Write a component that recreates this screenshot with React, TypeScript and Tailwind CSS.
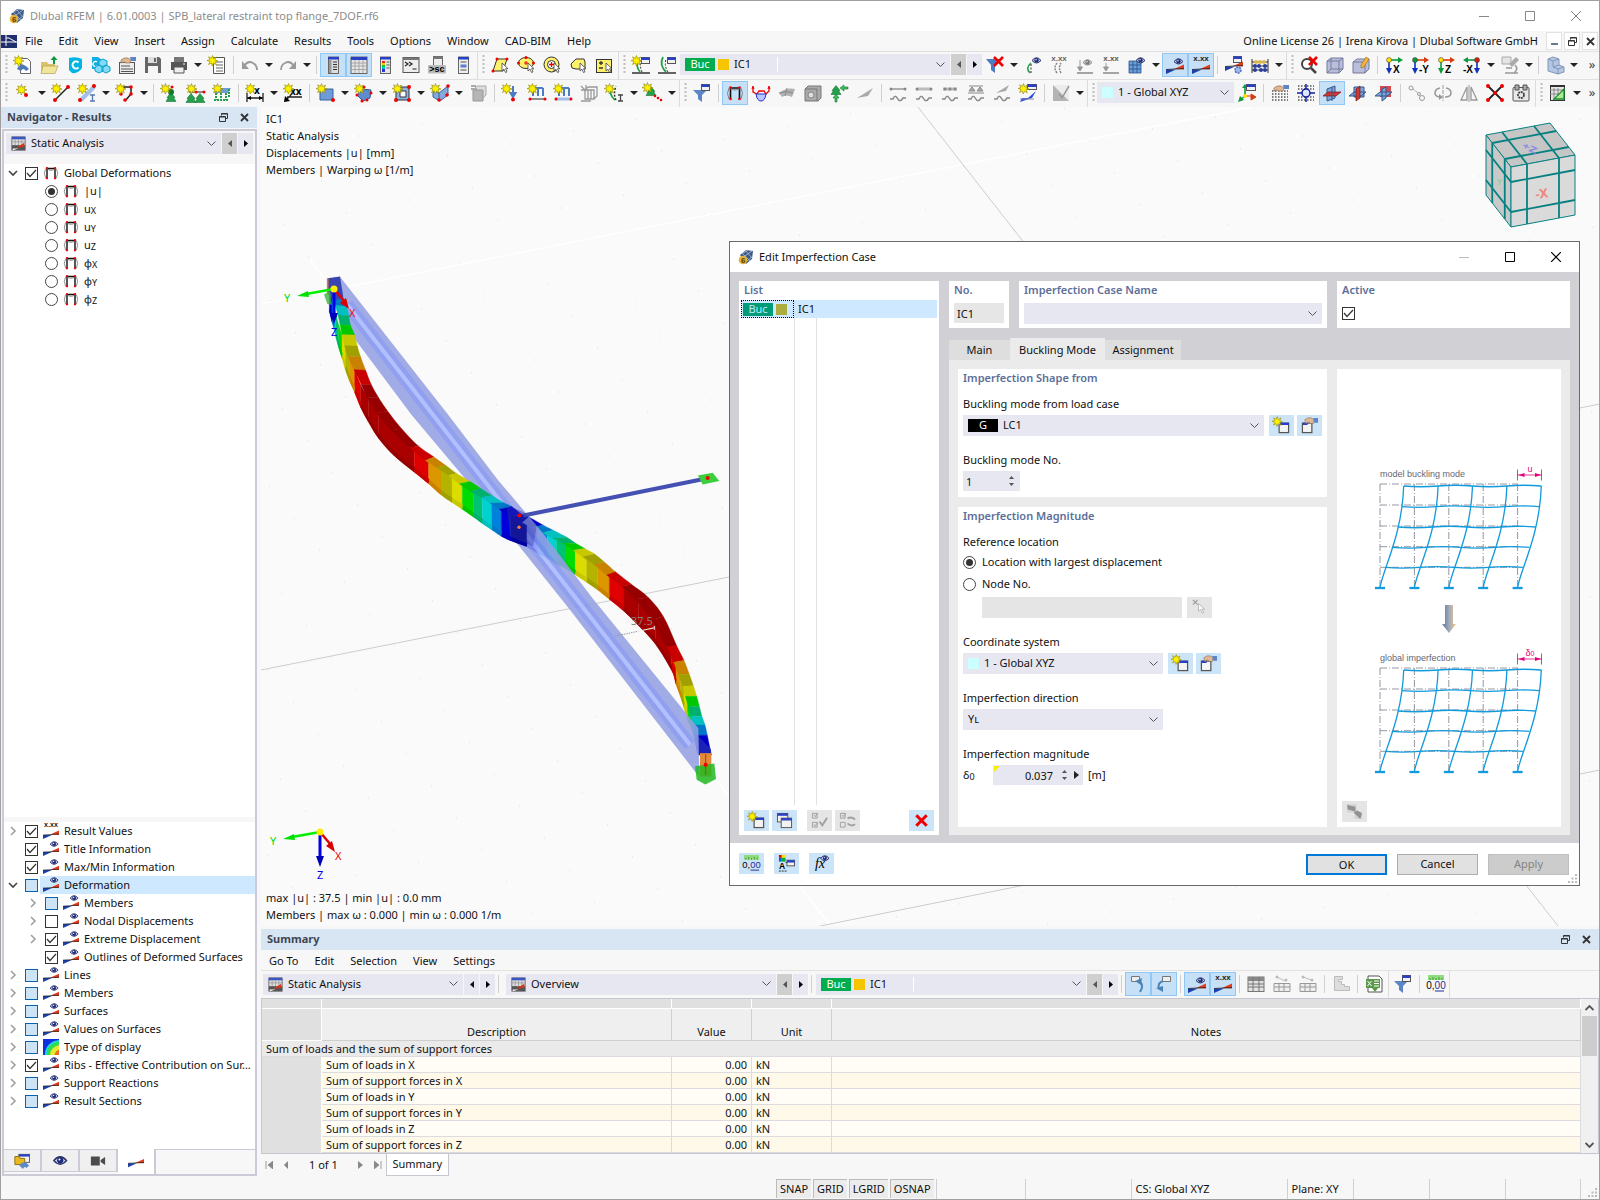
import React, { useState } from 'react';

type Children = { children?: React.ReactNode };

/* ---------- icon parts ---------- */

const Star = ({ x = 0, y = 0 }: { x?: number; y?: number }) => (
  <path
    transform={`translate(${x} ${y})`}
    d="M4.500-.5l1 3 3-1.500L7 4l3 1-3 .8 1.300 3-2.800-1.600L4.300 10 3.300 7 .5 8.500 2 5.500-1 4.500l2.900-.8L.6.8l2.800 1.500z"
    fill="#fff000"
    stroke="#8f8400"
    strokeWidth=".6"
  />
);

const Dots = ({ at, r = 1.5, fill = '#f00000' }: { at: number[][]; r?: number; fill?: string }) => (
  <>
    {at.map(([x, y]) => (
      <circle key={`${x}-${y}`} cx={x} cy={y} r={r} fill={fill} />
    ))}
  </>
);

const Eye = ({ x = 0, y = 0, gray = false }: { x?: number; y?: number; gray?: boolean }) => (
  <g transform={`translate(${x} ${y})`}>
    <path d="M0 3.500Q4.500-2 9 3.500 4.500 8.500 0 3.500z" fill={gray ? '#d8d8d8' : '#c3cbee'} stroke={gray ? '#888' : '#27305f'} />
    <circle cx="4.500" cy="3.300" r="2.200" fill={gray ? '#777' : '#1c2a7a'} />
    <circle cx="4" cy="2.700" r=".7" fill="#fff" />
  </g>
);

const Wedge = ({ y = 0 }: { y?: number }) => (
  <g transform={`translate(0 ${y})`}>
    <path d="M0 12.500h10L0 17z" fill="#1c3fae" />
    <path d="M8 12l10-4.500V12.500z" fill="#e23a1c" />
    <path d="M0 12.500L18 11.500" stroke="#222" strokeWidth=".8" />
  </g>
);

const Win = ({ x = 0, y = 0, w = 10, h = 8 }: { x?: number; y?: number; w?: number; h?: number }) => (
  <g>
    <rect x={x + 0.5} y={y + 0.5} width={w} height={h} fill="#f2f2f2" stroke="#555" />
    <rect x={x + 0.5} y={y + 0.5} width={w} height="2.500" fill="#2a3fc8" />
  </g>
);

const Cursor = ({ x = 0, y = 0 }: { x?: number; y?: number }) => (
  <path transform={`translate(${x} ${y})`} d="M0 0v8l2-1.800L3.500 9.500l1.500-.7L3.600 5.700H6z" fill="#fff" stroke="#444" strokeWidth=".8" />
);

const Hand = () => (
  <>
    <path d="M3 4q3-3 7-2l3 2-1 3H8L6 6 3 7z" fill="#e0b894" stroke="#8a6547" strokeWidth=".6" />
    <path d="M12 1h6v4h-5z" fill="#5b84c9" />
  </>
);

const Wave = () => <path d="M1 15h3q2-5 4.500-.5T14 14h3" fill="none" stroke="#888" strokeWidth="1.500" />;

const Values = ({ y = 5, fill = '#222' }: { y?: number; fill?: string }) => (
  <text x="9" y={y} textAnchor="middle" fontSize="8" fontWeight="700" fontFamily="Liberation Sans, sans-serif" fill={fill}>
    x.xx
  </text>
);

const Axis = ({ name, a, b, c, left = false }: { name: string; a: string; b: string; c: string; left?: boolean }) => (
  <>
    <path d={left ? 'M14 4H4' : 'M4 4h10'} stroke={a} strokeWidth="1.600" />
    <path d={left ? 'M5 1L0 4l5 3z' : 'M13 1l5 3-5 3z'} fill={a} />
    <path d={left ? 'M14 4v9' : 'M4 4v9'} stroke={b} strokeWidth="1.600" />
    <path d={left ? 'M11 12h6l-3 6z' : 'M1 12h6l-3 6z'} fill={b} />
    <circle cx={left ? 14 : 4} cy="4" r="2.500" fill={c} stroke="#333" strokeWidth=".5" />
    <text x={left ? 0 : 8} y="17" fontSize="10" fontWeight="700" fontFamily="Liberation Sans, sans-serif">
      {name}
    </text>
  </>
);

const FrameShape = () => (
  <>
    <path d="M4.500 15V4h9v11" fill="none" stroke="#111" strokeWidth="1.600" />
    <path d="M4 4Q9 8 14 4M3 15Q0 9 3 4M15 15q3-6 0-11" fill="none" stroke="#777" strokeWidth=".9" />
    <Dots at={[[4.5, 3.5], [13.5, 3.5], [4.5, 15], [13.5, 15]]} r={1.3} />
  </>
);

const Support = ({ x, y }: { x: number; y: number }) => (
  <path transform={`translate(${x} ${y})`} d="M0-2.500l4 5H2.500l2.500 4h-10l2.500-4H-4z" fill="#23a04a" stroke="#0c6128" strokeWidth=".5" />
);

/* ---------- icons ---------- */

const icons: Record<string, React.ReactNode> = {
  'New model': (<><path d="M6.500 2.500h7l3 3v12h-10z" fill="#fff" stroke="#666" /><path d="M3 13q4-9 12 0l-3 2q-3-4-5 0z" fill="#4f79b8" /><Star /></>),
  Open: (<><path d="M1 6h6l1.500 2H15v9H1z" fill="#d9c46a" /><path d="M3 10h15l-3 7.500H1z" fill="#f2e49a" stroke="#a8964a" strokeWidth=".6" /><path d="M13 8V4h-2.500L14 0l3.500 4H15v4z" fill="#0a9a3c" /></>),
  'Dlubal Center': (<><path d="M3 2q7-2 13 1v9q-4 6-10 5L3 14z" fill="#00b5e2" /><path d="M12.500 6.500a3.500 3.500 0 1 0 0 5" fill="none" stroke="#fff" strokeWidth="2" /></>),
  Blocks: (<><path d="M0 1h6l4 3v9H0z" fill="#13aee0" /><path d="M5 6a2.500 2.500 0 1 0 0 4" fill="none" stroke="#fff" strokeWidth="1.300" /><path d="M11 3l4 2v4l-4 2-4-2V5zM7 9l4 2v4l-4 2-4-2v-4zM14 9l4 2v4l-4 2-4-2v-4z" fill="#7fdcf6" stroke="#0b9fd0" /></>),
  Edit: (<><rect x="1.500" y="6.500" width="15" height="11" fill="#ececec" stroke="#555" /><path d="M3 10h9M3 13h12M3 15.500h12" stroke="#555" /><Hand /></>),
  Save: (<><path d="M1 1h14l2 2v14H1z" fill="#666" /><path d="M4 1h9v6H4z" fill="#ddd" /><path d="M4 10h10v7H4z" fill="#f5f5f5" /><path d="M10 2h2v4h-2z" fill="#666" /></>),
  Print: (<><path d="M4 1h10v5H4z" fill="#777" /><path d="M1 6h16v8H1z" fill="#555" /><path d="M4 11h10v6H4z" fill="#eee" stroke="#555" /><path d="M13 8h2" stroke="#fff" /></>),
  Report: (<><path d="M5.500 1.500h11v16h-11z" fill="#fff" stroke="#555" /><path d="M8 6h7M8 9h7M8 12h7M8 15h7" stroke="#666" /><Star /></>),
  Undo: (<><path d="M3 10q4-6 9-3 4 2 4 7" fill="none" stroke="#9a9a9a" strokeWidth="1.800" /><path d="M1 5v8h7z" fill="#9a9a9a" /></>),
  Redo: (<><path d="M15 10q-4-6-9-3-4 2-4 7" fill="none" stroke="#9a9a9a" strokeWidth="1.800" /><path d="M17 5v8h-7z" fill="#9a9a9a" /></>),
  Navigator: (<><rect x="4.500" y="1" width="10" height="16.500" fill="#ddd" stroke="#666" /><path d="M4 1h11v2.500H4z" fill="#2a3fc8" /><path d="M9 6h4M9 8.500h4M9 11h4M9 13.500h4" stroke="#333" /><path d="M5 4h2.500v13H5z" fill="#999" /></>),
  Tables: (<><rect x="1" y="1" width="16" height="16.500" fill="#e6e6e6" stroke="#666" /><path d="M1 1h16v3H1z" fill="#2a3fc8" /><path d="M1 7h16M1 10h16M1 13.500h16M5 4v13M9 4v13M13 4v13" stroke="#999" strokeWidth=".8" /></>),
  'Control panel': (<><rect x="4.500" y="1" width="10" height="16.500" fill="#e6e6e6" stroke="#666" /><path d="M4 1h11v2.500H4z" fill="#2a3fc8" /><path d="M6 5h3v2H6z" fill="#e22" /><path d="M6 7h3v2H6z" fill="#dd0" /><path d="M6 9h3v2H6z" fill="#0c3" /><path d="M6 11h3v2H6z" fill="#0bd" /><path d="M6 13h3v3H6z" fill="#33d" /><path d="M10.500 6h3M10.500 9h3M10.500 12h3" stroke="#555" /></>),
  Console: (<><rect x="1" y="1.500" width="16" height="15" fill="#eee" stroke="#555" /><path d="M1 1.500h16v2.500H1z" fill="#777" /><path d="M3 6l3 2-3 2M7 6l3 2-3 2M10.500 13h4" fill="none" stroke="#222" strokeWidth="1.200" /></>),
  Script: (<><rect x="5.500" y=".5" width="9" height="9" fill="#eee" stroke="#666" /><path d="M5 .5h10v2.500H5z" fill="#777" /><rect y="9" width="18" height="8.500" rx="1" fill="#bbb" /><text x="9" y="16" textAnchor="middle" fontSize="9" fontWeight="700" fontFamily="Liberation Sans, sans-serif">&gt;sc</text></>),
  Manager: (<><rect x="4.500" y="1" width="10" height="16.500" fill="#eee" stroke="#666" /><path d="M4 1h11v2.500H4z" fill="#2a3fc8" /><path d="M6.500 6h6M6.500 14h6" stroke="#555" /><path d="M6.500 8.500h6v3h-6z" fill="#5a7fd0" /></>),
  'Select area': (<><path d="M6 3h10l-4 12H2z" fill="#fdf06a" stroke="#333" /><Dots at={[[6, 3], [16, 3], [2, 15]]} /><Cursor x={11} y={7} /></>),
  'Select ellipse': (<><ellipse cx="9" cy="7" rx="7.500" ry="5.500" fill="#fdf06a" stroke="#333" /><path d="M9 5v4M7 7h4" stroke="#e00" /><Dots at={[[9, 1.5], [1.5, 7], [16.5, 7]]} /><Cursor x={11} y={7} /></>),
  'Select ring': (<><circle cx="8.500" cy="8.500" r="7.500" fill="#fdf06a" stroke="#333" /><circle cx="8.500" cy="8.500" r="4" fill="#fff" stroke="#333" /><path d="M8.500 6v5M6 8.500h5" stroke="#e00" strokeWidth="1.300" /><Cursor x={11} y={7} /></>),
  'Select lasso': (<><path d="M2 8l5-5h8l1 3v7H7l-4-1z" fill="#fdf06a" stroke="#333" /><Cursor x={11} y={7} /></>),
  'Select by value': (<><rect x="1.500" y="3.500" width="15" height="13" fill="#fdf06a" stroke="#333" /><path d="M6 5v4M4 7h4M4 12h4" stroke="#333" strokeWidth="1.300" /><Cursor x={11} y={7} /></>),
  'New load case': (<><path d="M8 16Q3 10 7 3" fill="none" stroke="#23a04a" strokeWidth="1.800" /><path d="M10 16Q7 10 10 3" fill="none" stroke="#333" strokeDasharray="2 1.500" /><path d="M0 17h18" stroke="#333" strokeWidth="1.500" /><Win x={9} y={1} w={8} h={6} /><Star /></>),
  'Edit load case': (<><path d="M8 16Q1 9 5 1" fill="none" stroke="#23a04a" strokeWidth="1.800" /><path d="M10 16Q6 10 8 3" fill="none" stroke="#333" strokeDasharray="2 1.500" /><path d="M0 17h18" stroke="#333" strokeWidth="1.500" /><Win x={9} y={1} w={8} h={6} /></>),
  'Delete filter': (<><path d="M0 3h14L9 9v8l-4-3V9z" fill="#4b7cc4" /><path d="M8 1l9 9M17 1l-9 9" stroke="#f00000" strokeWidth="2.600" /></>),
  'Show imperfection': (<><path d="M6 17Q1 12 7 7" fill="none" stroke="#23a04a" strokeWidth="1.600" /><path d="M7 17V7" stroke="#333" strokeDasharray="2 1.500" /><Eye x={8} y={1} /></>),
  'Imperfection values': (<><Values fill="#666" /><path d="M7 17Q3 12 7 7M11 17Q8 12 11 7" fill="none" stroke="#888" strokeWidth="1.500" strokeDasharray="2 1" /></>),
  'Show loads': (<><path d="M1 17h16" stroke="#888" strokeWidth="1.500" /><path d="M4 4v9M1.500 11L4 15l2.500-4z" stroke="#999" fill="#999" /><Eye x={7} y={3} gray /></>),
  'Load values': (<><Values fill="#555" /><path d="M1 17h16" stroke="#888" strokeWidth="1.500" /><path d="M4 7v6M1.500 11L4 15l2.500-4z" stroke="#999" fill="#999" /></>),
  'Show mesh': (<><path d="M1 5h12v12H1z" fill="#6d9fd8" /><path d="M1 9h12M1 13h12M5 5v12M9 5v12M1 5h12v12H1z" stroke="#26528a" fill="none" strokeWidth=".8" /><Eye x={8} y={1} /></>),
  'Show results': (<><Wedge y={1} /><Eye x={8} y={2} /></>),
  'Result values': (<><Values /><Wedge y={1} /></>),
  'Result settings': (<><Wedge y={-2} /><Win x={8} y={0} w={8} h={6} /><circle cx="13" cy="14" r="3" fill="#9db8ee" stroke="#4c70c4" strokeWidth="1.500" strokeDasharray="2 1" /></>),
  Abacus: (<><path d="M1 3v14M17 3v14M1 6h16M1 10h16M1 14h16" stroke="#333" /><Dots at={[[5, 6], [9, 6], [13, 6]]} fill="#ddb84a" r={2} /><Dots at={[[4, 10], [8, 10], [14, 10], [4, 14], [10, 14], [14, 14]]} fill="#2a3f9a" r={2} /></>),
  'Zoom all': (<><circle cx="7" cy="8" r="5" fill="#fff" stroke="#444" strokeWidth="2" /><path d="M11 12l5 5" stroke="#444" strokeWidth="2.500" /><path d="M9 1l8 8M17 1L9 9" stroke="#f00000" strokeWidth="2.600" /></>),
  'Solid view': (<><path d="M1 5l4-3h12v11l-4 4H1z" fill="#b9bedb" stroke="#767b9c" /><path d="M1 5h12v12M13 5l4-3M5 2v11L1 17M5 13h12" fill="none" stroke="#767b9c" /></>),
  'Edit view': (<><path d="M1 6l4-3h12v10l-4 4H1z" fill="#b9bedb" stroke="#767b9c" /><path d="M1 6h12v11M13 6l4-3" fill="none" stroke="#767b9c" /><path d="M9 9l5-8 3 2-5 8-3 1z" fill="#f3b23a" stroke="#9a6a12" strokeWidth=".6" /></>),
  'View X': <Axis name="X" a="#0a9a3c" b="#1030c0" c="#ffe000" />,
  'View -Y': <Axis name="-Y" a="#d83a10" b="#1030c0" c="#0a9a3c" />,
  'View Z': <Axis name="Z" a="#d83a10" b="#0a9a3c" c="#ffe000" />,
  'View -X': <Axis name="-X" a="#0a9a3c" b="#1030c0" c="#d02010" left />,
  Microscope: (<><path d="M1 1h9v7H1z" fill="#e4e4e4" stroke="#aaa" /><path d="M15 1l3 3-7 7-3-3z" fill="#aaa" /><path d="M4 17h13M14 9q4 4-1 8M5 12h6" fill="none" stroke="#999" strokeWidth="1.600" /></>),
  'Model display': (<><path d="M2 3l5-2 6 2v6l5 2v5l-6 2-10-3z" fill="#b3c6e2" stroke="#8298bb" /><path d="M2 3l5 2 6-2M7 5v6l6-2M7 11l5 2 6-2M12 13v5" fill="none" stroke="#8298bb" /></>),
  // second row
  'New node': (<><Star x={3} y={1} /><Dots at={[[12, 11]]} r={2} /></>),
  'New line': (<><path d="M3 16L16 3" stroke="#222" strokeWidth="1.500" /><Dots at={[[3, 16], [16, 3]]} r={2} /><Star /></>),
  'New member': (<><path d="M3 16L16 3" stroke="#a3bfe6" strokeWidth="4" /><Dots at={[[2, 16], [16, 2]]} r={2} /><path d="M12 11h5M12 17h5M14.500 11v6" stroke="#5578b0" strokeWidth="1.300" /><Star /></>),
  'New member set': (<><path d="M5 3h10v7l-6 7" fill="none" stroke="#222" strokeWidth="1.500" /><Dots at={[[15, 3], [15, 10], [9, 16], [5, 10]]} r={1.8} /><Star /></>),
  'Nodal support': (<><Support x={10} y={11} /><circle cx="10" cy="8" r="3" fill="#0d7a30" /><Dots at={[[11, 3]]} /><Star /></>),
  'Line support': (<><path d="M2 8h15" stroke="#222" /><Support x={4} y={12} /><Support x={13} y={12} /><Dots at={[[9, 8], [17, 8]]} /><Star /></>),
  'Surface support': (<><path d="M5 4h13l-3 5H1z" fill="#6f9bd8" /><path d="M3 9v7M8 9v7M13 9v7M1 16h15M16 5v8" stroke="#23a04a" strokeWidth="2" strokeDasharray="2 1" /><Star /></>),
  Dimension: (<><path d="M1 9v9M17 9v9M1 14h16" stroke="#222" strokeWidth="1.300" /><path d="M1 14l4-2v4zM17 14l-4-2v4z" /><text x="8" y="10" fontSize="10" fontWeight="700">x</text><Star /></>),
  'Dimension slope': (<><path d="M3 13h15M1 17l6-6" stroke="#222" strokeWidth="1.300" /><path d="M0 18l1-6 5 5z" /><text x="6" y="11" fontSize="10" fontWeight="700">xx</text><Star /></>),
  'New surface': (<><path d="M3 5h13v11H3z" fill="#6f9bd8" stroke="#38629c" /><Dots at={[[16, 16]]} r={2} /><Star /></>),
  'New opening': (<><path d="M2 11l5-6 9 1-1 8-7 3z" fill="#5f8ccc" stroke="#2f568f" /><Dots at={[[2, 11], [16, 9], [7, 17], [12, 16], [9, 3]]} /><Star /></>),
  'Surface opening': (<><path d="M3 3h13v13H3z" fill="#8fb3e3" stroke="#333" /><path d="M7 7h6v6H7z" fill="#fff" stroke="#333" /><Dots at={[[3, 16], [16, 3], [16, 16]]} r={2} /><Star /></>),
  'New solid': (<><path d="M2 6l6 3 9-7v9l-8 6-7-4z" fill="#84aade" stroke="#38629c" /><path d="M8 9v8" stroke="#38629c" /><Dots at={[[8, 16], [16, 11], [17, 2]]} r={1.8} /><Star /></>),
  'Solid set': (<><path d="M5 5l3-3h9v9l-3 3" fill="#ddd" stroke="#aaa" /><path d="M4 6h10v11H4z" fill="#b5b5b5" stroke="#999" /><path d="M2 2h5M2 5h6" stroke="#aaa" strokeWidth="2" /></>),
  'Nodal load': (<><path d="M11 2v9M8.500 9l2.500 4 2.500-4z" stroke="#4b7cc4" strokeWidth="2" fill="#4b7cc4" /><Dots at={[[11, 15.5]]} r={2} /><Star /></>),
  'Line load': (<><path d="M3 4h12M5 4v8M10 4v8M15 4v8" stroke="#4b7cc4" strokeWidth="2" /><path d="M2 15h15" stroke="#222" /><Dots at={[[2, 15], [17, 15]]} /><Star /></>),
  'Member load': (<><path d="M5 4h10M5 4v8M10 4v8M15 4v8" stroke="#4b7cc4" strokeWidth="2" /><path d="M2 15h15" stroke="#a3bfe6" strokeWidth="3" /><Dots at={[[2, 15], [17, 15]]} /><Star /></>),
  'Solid load': (<><path d="M5 6h9v9H5zM8 3h9v9l-3 3M5 6l3-3M1 2l5 5M6 1v5M1 6h5M1 17h10M8 6v9M11 6v9" fill="none" stroke="#999" strokeWidth="1.300" /></>),
  Imperfection: (<><path d="M9 16Q2 10 6 3" fill="none" stroke="#23a04a" strokeWidth="1.800" /><path d="M10 16Q7 10 10 2" fill="none" stroke="#333" strokeWidth="1.500" strokeDasharray="2 1.500" /><path d="M12 11h5M12 17h5M14.500 11v6" stroke="#444" strokeWidth="1.300" /><Star x={-1} /></>),
  'Imposed displacement': (<><Support x={7} y={5} /><Dots at={[[11, 12], [14, 14], [17, 16]]} r={1.3} /><Star x={-1} y={-1} /></>),
  Filter: (<><path d="M0 6h14L9 11v7l-4-3v-4z" fill="#5a86c8" /><Win x={8} y={0} w={8} h={6} /></>),
  Deformations: <FrameShape />,
  'Internal forces': (<><path d="M1 3v5l4 2 2-3h5l2 3 3-3V3" fill="none" stroke="#e00" strokeWidth="1.300" /><path d="M0 5l1-3 1 3M16 5l1-3 1 3" stroke="#e00" fill="none" /><path d="M4 10h10q-1 7-5 7t-5-7z" fill="#b9c6ff" stroke="#2030d0" /></>),
  Stresses: (<><path d="M1 9q7-6 16-4l-3 8Q8 10 4 13z" fill="#b0b0b0" /><path d="M1 9q8-3 14 0M9 4l-2 8" stroke="#888" fill="none" /></>),
  'Solid results': (<><path d="M1 5l3-3h13v12l-3 3H1z" fill="#aaa" stroke="#777" /><path d="M1 5h12v12" fill="none" stroke="#777" /><circle cx="7" cy="11" r="3" fill="#ddd" stroke="#888" /></>),
  Reactions: (<><Support x={6} y={4} /><path d="M5 18v-4H3l3-4 3 4H7v4zM10 4l4-3v2h4v2h-4v2z" fill="#3bbd5a" stroke="#137a2c" strokeWidth=".6" /></>),
  'Section results': <path d="M1 14L17 4 12 12zM3 14h9" fill="#aaa" />,
  'Wave 1': (<><path d="M2 5h14" stroke="#888" strokeWidth="1.300" /><Dots at={[[2, 5], [16, 5]]} fill="#888" /><Wave /></>),
  'Wave 2': (<><path d="M2 5h14" stroke="#bbb" strokeWidth="3" /><Dots at={[[2, 5], [16, 5]]} fill="#888" /><Wave /></>),
  'Wave 3': (<><path d="M2 5h14" stroke="#bbb" strokeWidth="3" /><Dots at={[[4, 5], [9, 5], [14, 5]]} fill="#888" /><Wave /></>),
  'Wave 4': (<><path d="M2 2h14M5 3l-3 4h6zM13 3l-3 4h6zM1 9h16" fill="#aaa" stroke="#888" /><Wave /></>),
  'Wave 5': (<><path d="M3 9L16 1l-3 6z" fill="#aaa" /><Wave /></>),
  'New wave': (<><path d="M3 14h6L17 7 13 14 1 18z" fill="#2c4de0" /><path d="M1 15h14" stroke="#88a" /><Win x={8} y={0} w={9} h={5} /><Star /></>),
  Clipping: (<><path d="M1 1h16v16z" fill="#ececec" /><path d="M1 1l16 16H1z" fill="#b4b4b4" /><path d="M7 10l3 4L17 2" stroke="#999" fill="none" strokeWidth="1.500" /></>),
  'Edit coordinate system': (<><path d="M7 11V3M7 12l-5 4" stroke="#0a9a3c" strokeWidth="1.600" /><path d="M0 18l2-6 4 4zM4 4l3-4 3 4z" fill="#0a9a3c" /><path d="M7 12h7M13 10l5 3-5 3z" stroke="#d83a10" fill="#d83a10" /><Win x={8} y={0} w={9} h={6} /><Dots at={[[7, 12]]} fill="#ffe000" r={2} /></>),
  'Grid settings': (<><path d="M1 7h16M1 10h16M1 13h16M1 16h16" stroke="#555" strokeWidth="1.500" strokeDasharray="1.500 1.500" /><Hand /></>),
  Snap: (<><path d="M1 2h16M1 5h16M1 13h16M1 16h16" stroke="#555" strokeWidth="1.500" strokeDasharray="1.500 1.500" /><circle cx="9" cy="9" r="4" fill="#dfe6ff" stroke="#1020a0" strokeWidth="1.500" /><path d="M9 0v5M9 13v5M0 9h5M13 9h5" stroke="#1020a0" strokeWidth="1.500" /></>),
  'Work plane XY': (<><path d="M4 5l8-3v12l-8 3z" fill="#7ea6da" stroke="#33598f" /><path d="M0 12l5-4h13l-5 4z" fill="#c83a3a" stroke="#7a1616" strokeWidth=".7" /><path d="M9 3v14" stroke="#33598f" /></>),
  'Work plane YZ': (<><path d="M5 3h10v10H5zM0 12l5-4h12l-5 4z" fill="#7ea6da" stroke="#33598f" /><path d="M7 5l4-3v12l-4 3z" fill="#c83a3a" stroke="#7a1616" strokeWidth=".7" /></>),
  'Work plane XZ': (<><path d="M5 2h11v11H5z" fill="#d34b4b" /><path d="M0 12l5-4h12l-5 4zM7 5l4-2v11l-4 3z" fill="#7ea6da" stroke="#33598f" /></>),
  Copy: (<><circle cx="3" cy="4" r="2" fill="none" stroke="#999" /><circle cx="14" cy="14" r="2.500" fill="none" stroke="#999" /><circle cx="11" cy="10" r="1.500" fill="none" stroke="#999" /><path d="M5 5l5 4" stroke="#999" strokeDasharray="2 1" /></>),
  Rotate: (<><path d="M9 1v16" stroke="#999" strokeDasharray="4 1" /><path d="M6 4Q1 5 1 9t6 4M12 4q5 1 5 5t-6 4" fill="none" stroke="#999" strokeWidth="1.600" /><path d="M9 13l-4-3v6z" fill="#999" /></>),
  Mirror: (<><path d="M7 3v13H1zM11 3v13h6z" fill="none" stroke="#999" strokeWidth="1.300" /><path d="M9 1v17" stroke="#999" /></>),
  Intersect: (<><path d="M2 2l14 14M16 2L2 16" stroke="#222" strokeWidth="1.800" /><Dots at={[[2, 2], [16, 16], [16, 2], [2, 16], [9, 9]]} r={2} /></>),
  Settings: (<><rect x="1" y="3.500" width="16" height="13.500" rx="1" fill="#e8e8e8" stroke="#555" /><path d="M3 1h4v5H3zM11 1h4v5h-4z" fill="#aaa" stroke="#555" /><circle cx="9" cy="11" r="3" fill="none" stroke="#444" strokeWidth="1.800" strokeDasharray="2 .7" /></>),
  'Mesh report': (<><rect x="1.500" y="2" width="14" height="14.500" fill="#e6e6e6" stroke="#333" /><path d="M1 1h15v2H1z" fill="#333" /><path d="M1 6h14M1 10h14M5 4v12M9 4v12" stroke="#888" /><path d="M5 15h10V5z" fill="#a8ec98" stroke="#1b8e2b" strokeWidth="1.300" /></>),
  // summary toolbar
  'Jump back': (<><path d="M2.500 1.500h8v5h-8z" fill="#eee" stroke="#777" /><path d="M9 6q7 3 2 11" fill="none" stroke="#4d84b8" strokeWidth="2" /><path d="M6 6l7-3-1 7z" fill="#4d84b8" /></>),
  'Jump forward': (<><path d="M7.500 1.500h8v5h-8z" fill="#eee" stroke="#777" /><path d="M8 6q-6 2-4 8" fill="none" stroke="#4d84b8" strokeWidth="2" /><path d="M1 13l7-2v6z" fill="#4d84b8" /></>),
  'Table rows': (<><rect x="1" y="2" width="16" height="14.500" fill="#e2e2e2" stroke="#777" /><path d="M1 2h16v4H1z" fill="#888" /><path d="M1 9h16M1 12h16M6 2v14M12 2v14" stroke="#777" /></>),
  'Table filter': (<><path d="M1 8.500h16v8H1zM1 12h16M6 8v8M11 8v8" fill="#eee" stroke="#999" /><path d="M4 2l8 4" stroke="#bbb" /><Dots at={[[4, 2], [13, 5]]} fill="#bbb" /></>),
  'Table columns': (<><path d="M1 8.500h16v8H1zM1 12h16M6 8v8M11 8v8" fill="#eee" stroke="#999" /><path d="M4 2l8 3" stroke="#bbb" /><Dots at={[[4, 2], [13, 5]]} fill="#bbb" /></>),
  Chart: <path d="M2.500 1.500h8v3h-4v2h3v3h3v2h5v4h-15z" fill="#ddd" stroke="#bbb" />,
  Excel: (<><path d="M3 1h11l3 3v13H3z" fill="#fff" stroke="#555" /><rect x="1" y="4" width="14" height="9" fill="#5a9a4a" /><path d="M2.500 6l4 5M6.500 6l-4 5M9 6h5M9 8.500h5M9 11h5" stroke="#fff" /><path d="M7 13h6l-3 4z" fill="#5a9a4a" /></>),
  Units: (<><path d="M1 0h16v5H1z" fill="#8fdc7f" /><path d="M3 3v2M6 2v3M9 3v2M12 2v3M15 3v2" stroke="#3a8a2a" strokeWidth=".8" /><text x="9" y="14" textAnchor="middle" fontSize="10" fontFamily="Liberation Sans, sans-serif">0,<tspan fill="#1c2f9a">00</tspan></text><path d="M8 16h9" stroke="#1c2f9a" /></>),
  // dialog
  New: (<><rect x="6.500" y="6.500" width="10" height="10" fill="#f4f4f4" stroke="#555" strokeWidth="1.300" /><path d="M7 6h10v2.500H7z" fill="#2a3fc8" /><Star /></>),
  Modify: (<><rect x="1.500" y="6.500" width="10" height="10" fill="#f4f4f4" stroke="#555" strokeWidth="1.300" /><path d="M2 6h5v2.500H2z" fill="#2a3fc8" /><path d="M4 3q3-3 7-2l3 2-1 4h-3L8 5 5 7z" fill="#e0b894" stroke="#8a6547" strokeWidth=".6" /><path d="M13 1h5v5h-4z" fill="#5b84c9" /></>),
  Duplicate: (<><Win x={1} y={1} w={11} h={9} /><Win x={5} y={6} w={11} h={10} /></>),
  'Check all': (<><path d="M1.500 1.500h5v5h-5zM1.500 11h5v5h-5zM3 3l1.500 2L7 1M3 13l1.500 2L7 11" fill="none" stroke="#a0a0a0" /><path d="M9 10l3 4 5-8" stroke="#a0a0a0" strokeWidth="2" fill="none" /></>),
  'Invert checks': (<><path d="M1.500 1.500h5v5h-5zM1.500 11h5v5h-5zM3 3l1.500 2L7 1" fill="none" stroke="#a0a0a0" /><path d="M17 8q-4-4-8-1M9 12q4 4 8 1" stroke="#a0a0a0" strokeWidth="2" fill="none" /></>),
  Delete: <path d="M3.500 3.500l11 11M14.500 3.500l-11 11" stroke="#f00000" strokeWidth="3.200" />,
  'Display settings': (<><path d="M1 0h3v3H1z" fill="#e00" /><path d="M4 0h4v3H4z" fill="#fd0" /><path d="M1 3h3v4H1z" fill="#06c" /><path d="M4 3h4v4H4z" fill="#0a4" /><path d="M8 8h3" stroke="#333" /><text x="1" y="15" fontSize="9" fontWeight="700" fontFamily="Liberation Sans, sans-serif">A</text><path d="M1 17h8" stroke="#222" strokeDasharray="2 1" /><Win x={9} y={5} w={8} h={6} /></>),
  Formula: (<><text x="2" y="14" fontSize="15" fontStyle="italic" fontFamily="Liberation Serif, serif">fx</text><Eye x={8} y={0} /></>),
  Pick: (<><path d="M2 1l5 5M7 1L2 6" stroke="#999" strokeWidth="1.200" /><path d="M8 5v8l2-2 2 4 1.500-.8-2-3.500h3z" fill="#fff" stroke="#aaa" strokeWidth=".8" /></>),
  Render: (<><path d="M1 1h10v9H1zM9 9h8v8H9z" fill="#d4d4d4" /><path d="M1 2l9 2v5L2 7zM8 10l4-2 5 3-2 6z" fill="#929292" /></>),
  // navigator
  'Result item': (<><Wedge y={0} /><Eye x={8} y={0} /></>),
  Analysis: (<><rect x="1" y="1" width="16" height="16" fill="#ddd" stroke="#666" /><path d="M1 1h16v3H1z" fill="#3a55c8" /><path d="M1 7h16M5 4v8M9 4v8M13 4v8" stroke="#999" /><path d="M1 11h16v6H1z" fill="#555" /><path d="M2 15h7l-7 2z" fill="#fff" /><path d="M6 14l10-6v5z" fill="#d8351a" /></>),
  'Color display': (<><rect width="18" height="18" fill="#1030e0" /><path d="M18 1A17 17 0 0 0 2 18h16z" fill="#20d0e0" /><path d="M18 3A15 15 0 0 0 4 18h14z" fill="#30dc50" /><path d="M18 7A11 11 0 0 0 8 18h10z" fill="#e8e830" /><path d="M18 12a7 7 0 0 0-5 6h5z" fill="#f07020" /></>),
  Data: (<><Win x={5} y={1} w={12} h={9} /><path d="M1 4h5l1 2h5v7H1z" fill="#e8b820" stroke="#8a6a00" /><path d="M6 14q5-7 11 0l-3 3q-2-3-4 1z" fill="#5a8ac8" /></>),
  Display: <g transform="translate(2 3) scale(1.6)"><Eye /></g>,
  Views: <path d="M1 4h10v10H1zM12 8l5-3.500v9L12 10z" fill="#4c4c4c" />,
  Results: <Wedge y={-2} />,
};

const Icon = ({ name, size = 18 }: { name: string; size?: number }) => (
  <svg width={size} height={size} viewBox="0 0 18 18" className="shrink-0 overflow-visible" aria-hidden="true">
    {icons[name]}
  </svg>
);

const Logo = () => (
  <svg width="16" height="16" viewBox="0 0 16 16" aria-hidden="true">
    <path d="M2 6L8 1l7 1-1 8-6 5z" fill="#3f5a84" />
    <path d="M5 4l5-3M7 7l7-5M9 12l5-4M4 4l8 8M8 2l6 7" stroke="#9fb6d8" strokeWidth=".9" />
    <circle cx="5" cy="11" r="4.300" fill="#e3b23a" />
    <text x="3" y="14" fontSize="8" fontWeight="700" fontFamily="Liberation Sans, sans-serif" fill="#5a3e00">6</text>
  </svg>
);

/* ---------- small controls ---------- */

// Toolbar layout strings: '|' separator, '/' tight line, 'v' menu arrow, '||' end of a toolbar, leading '*' pressed
function Tools({ items }: { items: string[] }) {
  return (
    <>
      {items.map((item, i) => {
        if (item === '|') return <span key={i} className="mx-[3px] h-[18px] w-px shrink-0 bg-[#cfcfcf]" />;
        if (item === '/') return <span key={i} className="mx-px h-7 w-px shrink-0 bg-[#dcdcdc]" />;
        if (item === '||')
          return (
            <span key={i} className="flex h-7 w-[11px] shrink-0 items-center gap-1 pl-px">
              <span className="h-full w-px bg-[#dcdcdc]" />
              <Grip />
            </span>
          );
        if (item === 'v')
          return (
            <button key={i} aria-label="More" className="flex h-6 w-3 shrink-0 items-center justify-center">
              <svg width="8" height="4" viewBox="0 0 8 4"><path d="M0 0h8L4 4z" fill="#222" /></svg>
            </button>
          );
        const on = item[0] === '*';
        const name = on ? item.slice(1) : item;
        return (
          <button
            key={i}
            aria-label={name}
            className={`flex h-6 w-[26px] shrink-0 items-center justify-center border ${on ? 'border-[#8fc8f5] bg-[#c5e0f7]' : 'border-transparent'}`}
          >
            <Icon name={name} />
          </button>
        );
      })}
    </>
  );
}

const Grip = () => (
  <svg width="3" height="19" viewBox="0 0 3 19" className="shrink-0">
    <path d="M1.500 0v19" stroke="#bdbdbd" strokeWidth="2" strokeDasharray="2 2" />
  </svg>
);

const More = () => (
  <button aria-label="More buttons" className="ml-auto flex h-6 w-[14px] shrink-0 items-center justify-center text-[13px] text-[#444]">
    »
  </button>
);

interface ComboProps extends Children {
  label: string;
  value: string;
  className: string;
  divider?: boolean;
  pad?: string;
  id?: string;
}

function Combo({ label, value, className, divider, pad = 'pl-[5px]', id, children }: ComboProps) {
  return (
    <div className={`relative flex h-[21px] items-center bg-[#e7e7f1] ${pad} ${className}`}>
      {children}
      <select id={id} aria-label={id ? undefined : label} className="h-full min-w-0 flex-1 appearance-none bg-transparent pl-[5px] outline-none">
        <option>{value}</option>
      </select>
      {divider && <span className="absolute left-[97px] h-[15px] w-px bg-white" />}
      <svg width="9" height="6" viewBox="0 0 9 6" className="pointer-events-none absolute right-[5px]">
        <path d="M.5.5l4 4 4-4" fill="none" stroke="#555" />
      </svg>
    </div>
  );
}

function PrevNext({ prevOn = false }: { prevOn?: boolean }) {
  return (
    <>
      <button aria-label="Previous" className={`ml-px flex h-[21px] w-[15px] shrink-0 items-center justify-center ${prevOn ? 'bg-[#e7e7f1]' : 'bg-[#cfcfcf]'}`}>
        <svg width="4" height="7" viewBox="0 0 4 7"><path d="M4 0v7L0 3.500z" fill={prevOn ? '#111' : '#555'} /></svg>
      </button>
      <button aria-label="Next" className="ml-px flex h-[21px] w-[15px] shrink-0 items-center justify-center bg-[#e7e7f1]">
        <svg width="4" height="7" viewBox="0 0 4 7"><path d="M0 0v7l4-3.500z" fill="#000" /></svg>
      </button>
    </>
  );
}

const Badge = () => (
  <>
    <span className="flex h-[13px] w-[30px] shrink-0 items-center justify-center bg-[#00ae4f] text-white">Buc</span>
    <span className="ml-[3px] h-[11px] w-[11px] shrink-0 bg-[#f7c400]" />
  </>
);

function CheckBox({ state, id, label }: { state: 'on' | 'off' | 'part'; id?: string; label?: string }) {
  const [checked, setChecked] = useState(state === 'on');
  return (
    <span className="grid h-[13px] w-[13px] shrink-0 place-items-center">
      <input
        type="checkbox"
        id={id}
        aria-label={label}
        checked={checked}
        onChange={(e) => setChecked(e.target.checked)}
        className={`peer h-[13px] w-[13px] appearance-none border [grid-area:1/1] ${state === 'part' ? 'border-[#0a64ad] bg-[#cde4f7]' : 'border-[#333] bg-white'}`}
      />
      <svg width="11" height="9" viewBox="0 0 11 9" className="pointer-events-none hidden [grid-area:1/1] peer-checked:block">
        <path d="M1 4l3 3.500L10 1" fill="none" stroke="#333" strokeWidth="1.200" />
      </svg>
    </span>
  );
}

function Radio({ name, id, on }: { name: string; id: string; on?: boolean }) {
  return (
    <span className="grid h-[13px] w-[13px] shrink-0 place-items-center">
      <input type="radio" name={name} id={id} defaultChecked={on} className="peer h-[13px] w-[13px] appearance-none rounded-full border border-[#444] bg-white [grid-area:1/1]" />
      <span className="pointer-events-none hidden h-[7px] w-[7px] rounded-full bg-[#333] [grid-area:1/1] peer-checked:block" />
    </span>
  );
}

const RestoreIcon = () => (
  <svg width="9" height="9" viewBox="0 0 9 9">
    <path d="M2.500 2.500v-2h6v5h-2M.5 3.500h6v5h-6zM.5 4h6M2.500 1h6" fill="none" stroke="#333" />
  </svg>
);

const CrossIcon = () => (
  <svg width="9" height="9" viewBox="0 0 9 9">
    <path d="M1 1l7 7M8 1L1 8" stroke="#333" strokeWidth="1.800" />
  </svg>
);

function PanelHeader({ title }: { title: string }) {
  return (
    <header className="flex h-[21px] shrink-0 items-center bg-[#d8e6f3] pr-2 pl-[6px]">
      <h2 className="flex-1 font-bold text-[#3f4552]">{title}</h2>
      <button aria-label="Float" className="mr-3"><RestoreIcon /></button>
      <button aria-label="Close"><CrossIcon /></button>
    </header>
  );
}

/* ---------- navigator ---------- */

interface TreeItem {
  text: string;
  check: 'on' | 'off' | 'part';
  arrow?: 'open' | 'closed';
  child?: boolean;
  icon?: string;
  selected?: boolean;
}

const displayItems: TreeItem[] = [
  { text: 'Result Values', check: 'on', arrow: 'closed', icon: 'Result values' },
  { text: 'Title Information', check: 'on' },
  { text: 'Max/Min Information', check: 'on' },
  { text: 'Deformation', check: 'part', arrow: 'open', selected: true },
  { text: 'Members', check: 'part', arrow: 'closed', child: true },
  { text: 'Nodal Displacements', check: 'off', arrow: 'closed', child: true },
  { text: 'Extreme Displacement', check: 'on', arrow: 'closed', child: true },
  { text: 'Outlines of Deformed Surfaces', check: 'on', child: true },
  { text: 'Lines', check: 'part', arrow: 'closed' },
  { text: 'Members', check: 'part', arrow: 'closed' },
  { text: 'Surfaces', check: 'part', arrow: 'closed' },
  { text: 'Values on Surfaces', check: 'part', arrow: 'closed' },
  { text: 'Type of display', check: 'part', arrow: 'closed', icon: 'Color display' },
  { text: 'Ribs - Effective Contribution on Sur...', check: 'on', arrow: 'closed' },
  { text: 'Support Reactions', check: 'part', arrow: 'closed' },
  { text: 'Result Sections', check: 'part', arrow: 'closed' },
];

const deformations = ['|u|', 'uX', 'uY', 'uZ', 'φX', 'φY', 'φZ'];

const TreeArrow = ({ open }: { open: boolean }) => (
  <svg width="10" height="10" viewBox="0 0 10 10">
    <path d={open ? 'M1 3l4 4 4-4' : 'M3 1l4 4-4 4'} fill="none" stroke={open ? '#444' : '#a0a0a0'} strokeWidth="1.600" />
  </svg>
);

function TreeRow({ item, id }: { item: TreeItem; id: string }) {
  return (
    <li className={`flex h-[18px] items-center ${item.child ? 'pl-5' : ''}`}>
      <span className="flex w-[21px] shrink-0 pl-1">
        {item.arrow && <button aria-label={`Expand ${item.text}`}><TreeArrow open={item.arrow === 'open'} /></button>}
      </span>
      <CheckBox state={item.check} id={id} />
      <label htmlFor={id} className={`ml-[2px] flex h-full min-w-0 flex-1 items-center gap-[5px] pl-[3px] ${item.selected ? 'bg-[#cde8ff]' : ''}`}>
        <Icon name={item.icon ?? 'Result item'} size={16} />
        <span className="whitespace-nowrap">{item.text}</span>
      </label>
    </li>
  );
}

function Navigator() {
  return (
    <aside className="flex w-64 shrink-0 flex-col">
      <PanelHeader title="Navigator - Results" />
      <div className="mt-px ml-px flex flex-1 flex-col border-2 border-[#cccad6] bg-[#f7f7f7]">
        <div className="flex h-[33px] shrink-0 pt-[2px] pl-[2px]">
          <Combo label="Analysis type" value="Static Analysis" className="w-[215px]">
            <Icon name="Analysis" size={15} />
          </Combo>
          <PrevNext />
        </div>
        <ul className="flex-1 bg-white">
          <li className="flex h-[18px] items-center">
            <span className="flex w-[21px] pl-1"><button aria-label="Collapse Global Deformations"><TreeArrow open /></button></span>
            <CheckBox state="on" id="global-def" />
            <label htmlFor="global-def" className="ml-[5px] flex items-center gap-[5px]">
              <Icon name="Deformations" size={16} />
              Global Deformations
            </label>
          </li>
          {deformations.map((d, i) => (
            <li key={d} className="flex h-[18px] items-center pl-[41px]">
              <Radio name="deformation" id={`def-${i}`} on={i === 0} />
              <label htmlFor={`def-${i}`} className="ml-[5px] flex items-center gap-[5px]">
                <Icon name="Deformations" size={16} />
                {i === 0 ? <span>{d}</span> : <span>{d[0]}<sub className="bottom-[-1px] text-[9px]">{d[1]}</sub></span>}
              </label>
            </li>
          ))}
        </ul>
        <div className="h-[5px] shrink-0" />
        <ul className="shrink-0 bg-white pb-[39px]">
          {displayItems.map((item, i) => <TreeRow key={i} item={item} id={`display-${i}`} />)}
        </ul>
        <nav className="flex h-[25px] shrink-0">
          {['Data', 'Display', 'Views', 'Results'].map((tab) => (
            <button
              key={tab}
              aria-label={tab}
              className={`flex w-[38px] items-center justify-center border-r-2 border-[#cccad6] ${tab === 'Results' ? 'bg-white' : 'mb-[2px] border-y bg-[#f0f0f0]'}`}
            >
              <Icon name={tab} size={16} />
            </button>
          ))}
          <span className="flex-1 border-t border-[#cccad6]" />
        </nav>
      </div>
    </aside>
  );
}

/* ---------- 3D view ---------- */

const flange = ['#0000a0', '#0000c8', '#0078c8', '#00c0c0', '#00b06c', '#00c800', '#c8c800', '#a0a000', '#c88200', '#c80000', '#960000'];
const web = ['#00008c', '#0000dc', '#0082dc', '#00d2d2', '#00c274', '#00dc00', '#dcdc00', '#b4b400', '#dc9600', '#e00000', '#aa0000'];

// Section stations along the deformed beam: flange edge, flange/web edge, bottom edge, colour step
const firstHalf = [
  [240, 75, 205, 75, 208, 150, 1], [248, 108, 222, 108, 216, 180, 2], [260, 135, 226, 132, 222, 200, 3],
  [266, 162, 234, 160, 228, 225, 4], [272, 190, 240, 188, 236, 255, 5], [284, 218, 246, 217, 246, 285, 6],
  [292, 250, 254, 248, 256, 318, 7], [302, 282, 264, 280, 268, 350, 8], [317, 320, 282, 318, 284, 385, 9],
  [334, 362, 304, 362, 302, 428, 10], [356, 400, 322, 400, 325, 470, 10], [384, 440, 350, 443, 356, 518, 10],
  [425, 490, 392, 492, 402, 568, 10], [475, 540, 450, 545, 463, 616, 9], [522, 572, 496, 582, 506, 650, 8],
  [558, 597, 530, 602, 543, 682, 7], [590, 620, 565, 625, 576, 704, 6], [630, 643, 598, 650, 607, 724, 5],
  [662, 663, 632, 672, 640, 746, 4], [696, 684, 664, 690, 667, 765, 3], [732, 705, 690, 706, 695, 783, 2],
  [755, 716, 718, 724, 724, 802, 1], [785, 738, 748, 745, 752, 815, 0], [806, 745, 778, 770, 800, 832, 0],
];

const secondHalf = [
  [800, 742, 790, 765, 800, 832, 1], [850, 770, 818, 775, 832, 850, 2], [880, 785, 848, 792, 862, 866, 3],
  [920, 805, 878, 808, 890, 882, 4], [948, 823, 908, 822, 918, 896, 5], [975, 838, 940, 843, 946, 914, 6],
  [1004, 854, 968, 862, 980, 936, 7], [1032, 876, 1003, 885, 1013, 958, 8], [1066, 905, 1040, 915, 1048, 985, 9],
  [1115, 942, 1085, 948, 1092, 1020, 10], [1165, 980, 1125, 985, 1136, 1062, 10], [1210, 1035, 1174, 1045, 1186, 1115, 10],
  [1250, 1120, 1220, 1123, 1235, 1192, 9], [1272, 1163, 1241, 1168, 1248, 1232, 8], [1288, 1203, 1255, 1203, 1262, 1270, 7],
  [1300, 1236, 1268, 1238, 1272, 1300, 6], [1310, 1267, 1276, 1267, 1282, 1333, 5], [1318, 1296, 1285, 1298, 1293, 1357, 4],
  [1326, 1325, 1292, 1325, 1300, 1380, 3], [1335, 1350, 1298, 1350, 1305, 1400, 2], [1342, 1380, 1305, 1380, 1310, 1420, 1],
  [1352, 1428, 1312, 1432, 1315, 1435, 1],
];

// Catmull-Rom points of one segment, both ends included
function segment(stations: number[][], i: number, steps = 5) {
  const p1 = stations[i];
  const p2 = stations[i + 1];
  const p0 = stations[i - 1] ?? p1;
  const p3 = stations[i + 2] ?? p2;
  return Array.from({ length: steps + 1 }, (_, s) => {
    const t = s / steps;
    return [0, 1, 2, 3, 4, 5].map(
      (k) =>
        0.5 *
        (2 * p1[k] + (p2[k] - p0[k]) * t + (2 * p0[k] - 5 * p1[k] + 4 * p2[k] - p3[k]) * t * t + (3 * p1[k] - p0[k] - 3 * p2[k] + p3[k]) * t * t * t)
    );
  });
}

// closed outline from one edge to the other
const strip = (one: number[][], other: number[][]) => [...one, ...[...other].reverse()].map((p) => p.join(',')).join(' ');

function Bands({ stations }: { stations: number[][] }) {
  const parts = stations.slice(0, -1).map((s, i) => {
    const pts = segment(stations, i);
    const low = pts.map((p) => [p[4], p[5]]);
    return {
      step: s[6],
      web: strip(pts.map((p) => [p[4], p[3]]), low),
      bottom: strip(low.map(([x, y]) => [x + 2, y - 13]), low),
      flange: strip(pts.map((p) => [p[0], p[1]]), pts.map((p) => [p[2], p[3]])),
    };
  });
  return (
    <>
      {parts.map((p, i) => <polygon key={i} points={p.web} fill={web[p.step]} stroke={web[p.step]} />)}
      {parts.map((p, i) => <polygon key={i} points={p.bottom} fill={flange[p.step]} />)}
      {parts.map((p, i) => <polygon key={i} points={p.flange} fill={flange[p.step]} stroke={flange[p.step]} />)}
    </>
  );
}

function Triad() {
  return (
    <g fontFamily="Noto Sans, sans-serif" fontSize="11">
      <path d="M0 0l-28 5" stroke="#00f000" strokeWidth="2.500" />
      <path d="M-37 7l11-5 1 6z" fill="#00e000" />
      <path d="M0 0v26" stroke="#0000e8" strokeWidth="3" />
      <path d="M-4 24h8l-4 11z" fill="#0000b8" />
      <path d="M0 0l11 13" stroke="#e80000" strokeWidth="2.500" />
      <path d="M15 20l-9-6 6-5z" fill="#d80000" />
      <circle r="3.500" fill="#ffee00" />
      <text x="-50" y="13" fill="#00e000">Y</text>
      <text x="15" y="28" fill="#f00000">X</text>
      <text x="-3" y="47" fill="#0000f0">Z</text>
    </g>
  );
}

// faint point grid of the work plane
const gridDots = () => {
  let d = '';
  for (let i = -20; i < 22; i++) {
    for (let j = -20; j < 40; j++) {
      const x = Math.round(636 + i * 63 + j * 25);
      const y = Math.round(119 - i * 12.3 + j * 32);
      if (x > 261 && x < 1600 && y > 107 && y < 926) d += `M${x} ${y}h1`;
    }
  }
  return d;
};

type Pt = [number, number];
const mix = (a: Pt, b: Pt, t: number): Pt => [a[0] + (b[0] - a[0]) * t, a[1] + (b[1] - a[1]) * t];

function NavCube() {
  const a: Pt = [0, 12], b: Pt = [64, 0], c: Pt = [89, 32], d: Pt = [25, 44];
  const a2: Pt = [0, 72], c2: Pt = [89, 92], d2: Pt = [25, 104];
  const faces: [Pt, Pt, Pt, Pt, string][] = [
    [a, b, c, d, '#c6c6c6'],
    [a, d, d2, a2, '#c9c9c9'],
    [d, c, c2, d2, '#dadada'],
  ];
  return (
    <g strokeLinejoin="round">
      {faces.map(([p, q, r, s, fill], i) => (
        <g key={i} stroke="#078080" strokeWidth="1.500">
          <polygon points={[p, q, r, s].join(' ')} fill={fill} strokeWidth="1" />
          {[0.25, 0.75].map((t) => (
            <path key={t} d={`M${mix(p, q, t)}L${mix(s, r, t)}M${mix(p, s, t)}L${mix(q, r, t)}`} strokeWidth="1.800" />
          ))}
        </g>
      ))}
      <g fontFamily="Noto Sans, sans-serif" fontWeight="700">
        <text x="50" y="76" fontSize="13" fill="#f0857e" transform="rotate(-8 50 76)">-X</text>
        <text x="-8" y="5" fontSize="12" fill="#8a8ae0" transform="matrix(.9 -.2 .6 .8 45 25) rotate(50)">+Z</text>
        <text x="11" y="62" fontSize="8" fill="#9acb9a">Y</text>
      </g>
    </g>
  );
}

function ModelView() {
  return (
    <section aria-label="Model" className="relative flex min-h-0 flex-1 flex-col justify-between overflow-hidden bg-[#fafafa]">
      <svg className="absolute inset-0 h-full w-full">
        <g transform="translate(-261 -107)">
          <path d={gridDots()} stroke="#dcdcdc" />
          <path d="M261 304L1253 107M310 260L830 925" stroke="#fff" strokeWidth="1.500" />
          <path d="M261 670L1600 404M918 107L1558 926M820 926L1600 770" stroke="#cdcdcd" />
          {/* the model has its own drawing units */}
          <g transform="matrix(.33333 0 0 .34438 260 260)">
            <Bands stations={secondHalf} />
            <path d="M1303 1370l49 50 3 18-41 0z" fill="#1a22b8" />
            <g opacity=".88">
              <path d="M205 55l35-6L565 450 715 640 850 795 1000 985 1315 1360 1318 1500 1305 1485 925 1010 770 822 620 640 455 450 285 230 215 120z" fill="#95a1e4" />
              <path d="M262 130L1290 1408" stroke="#8294ee" strokeWidth="38" />
              <path d="M262 130L1290 1408" stroke="#a9b8ff" strokeWidth="12" />
            </g>
            <Bands stations={firstHalf} />
            <path d="M203 53l37-5 10 60-28 10-18-20z" fill="#3a44b0" />
            <path d="M203 53v45" stroke="#d87a3a" strokeWidth="5" />
            <path d="M192 100l18-10 6 40-14-2z" fill="#3cb43c" opacity=".8" />
            <path d="M790 742L1342 634" stroke="#4450b4" strokeWidth="12" />
            <path d="M1314 626l44-8 20 24-50 10z" fill="#3ccf3c" />
            <path d="M740 712l50 20 40 40-10 60-70-30z" fill="#3038a8" opacity=".4" />
            <path d="M1320 1432h34v68h-34z" fill="#e08a3a" />
            <path d="M1305 1470l58-8 5 45-32 16-26-14z" fill="#20b820" opacity=".85" />
            <path d="M1337 1435v60" stroke="#b83a20" strokeWidth="3" />
            <Dots at={[[778, 742], [1343, 633], [1337, 1466]]} r={6} />
            <Dots at={[[777, 776]]} r={5} fill="#ff7a30" />
            <path d="M1065 1092l70-14" stroke="#999" strokeWidth="3" strokeDasharray="4 3" />
            <path d="M1135 1078l48-10v-6v12" fill="none" stroke="#eee" strokeWidth="3" />
          </g>
          <text x="631" y="625" fontSize="11" fontFamily="Noto Sans, sans-serif" fill="#8a7a7a">37.5</text>
          <g transform="translate(334 289)"><Triad /></g>
          <g transform="translate(320 832)"><Triad /></g>
        </g>
      </svg>
      <svg width="92" height="108" viewBox="-1 -1 92 108" className="absolute top-[15px] right-[22px]"><NavCube /></svg>
      <p className="relative pt-[3px] pl-[5px] leading-[17px]">
        IC1<br />Static Analysis<br />Displacements |u| [mm]<br />Members | Warping ω [1/m]
      </p>
      <p className="relative pb-[3px] pl-[5px] leading-[17px]">
        max |u| : 37.5 | min |u| : 0.0 mm<br />Members | max ω : 0.000 | min ω : 0.000 1/m
      </p>
    </section>
  );
}

/* ---------- summary ---------- */

const rows = ['loads in X', 'support forces in X', 'loads in Y', 'support forces in Y', 'loads in Z', 'support forces in Z'];

function Summary() {
  const head = 'border-r border-b border-[#cfcfcf] align-bottom leading-4 font-normal';
  const cell = 'h-4 border-r border-b border-[#dcdce0] leading-[15px]';
  return (
    <section className="mt-[3px] shrink-0">
      <PanelHeader title="Summary" />
      <nav className="flex h-5 items-center gap-4 pt-[2px] pl-2">
        {['Go To', 'Edit', 'Selection', 'View', 'Settings'].map((m) => <button key={m}>{m}</button>)}
      </nav>
      <div className="flex h-7 items-center overflow-hidden border-t border-[#e2e2e2] pb-px pl-[2px]">
        <Combo label="Analysis" value="Static Analysis" className="w-[200px] shrink-0"><Icon name="Analysis" size={15} /></Combo>
        <PrevNext prevOn />
        <span className="mr-[7px] ml-[3px] h-[18px] w-px shrink-0 bg-[#cfcfcf]" />
        <Combo label="Table" value="Overview" className="w-[270px] shrink-0"><Icon name="Analysis" size={15} /></Combo>
        <PrevNext />
        <span className="mr-1 ml-[3px] h-[18px] w-px shrink-0 bg-[#cfcfcf]" />
        <Combo label="Load case" value="IC1" divider className="w-[270px] shrink-0"><Badge /></Combo>
        <PrevNext />
        <Tools
          items={['|', '*Jump back', '*Jump forward', '|', '*Show results', '*Result values', '|', 'Table rows', 'Table filter', 'Table columns', '|', 'Chart', '|', 'Excel', '/', 'Filter', '|', 'Units']}
        />
        <span className="h-7 w-px shrink-0 bg-[#dcdcdc]" />
      </div>
      <div className="flex border border-[#c6c6cf]">
        <table className="flex-1 table-fixed border-separate border-spacing-0">
          <colgroup>
            <col className="w-[60px]" /><col className="w-[350px]" /><col className="w-20" /><col className="w-20" /><col />
          </colgroup>
          <thead>
            <tr className="h-[10px] bg-[#e0e0e0]">
              {[0, 1, 2, 3, 4].map((i) => <td key={i} className="border-r border-b border-white" />)}
            </tr>
            <tr className="h-8 bg-[#efefef]">
              <th className="border-r border-b border-white bg-[#e0e0e0]" />
              <th className={head}>Description</th>
              <th className={head}>Value</th>
              <th className={head}>Unit</th>
              <th className={head}>Notes</th>
            </tr>
          </thead>
          <tbody>
            <tr><td colSpan={5} className={`${cell} bg-[#eaeaea] pl-1`}>Sum of loads and the sum of support forces</td></tr>
            {rows.map((r, i) => (
              <tr key={r} className={i % 2 ? 'bg-[#fff9e9]' : 'bg-[#fffdf5]'}>
                <td className="border-r border-white bg-[#e0e0e0]" />
                <td className={`${cell} pl-1`}>Sum of {r}</td>
                <td className={`${cell} pr-1 text-right`}>0.00</td>
                <td className={`${cell} pl-1`}>kN</td>
                <td className={cell} />
              </tr>
            ))}
          </tbody>
        </table>
        <div className="flex w-[17px] flex-col items-center bg-[#f0f0f0]">
          <button aria-label="Scroll up" className="flex h-[17px] items-center"><svg width="9" height="6" viewBox="0 0 9 6"><path d="M.5 5l4-4 4 4" fill="none" stroke="#555" strokeWidth="1.800" /></svg></button>
          <span className="h-10 w-[15px] bg-[#cdcdcd]" />
          <button aria-label="Scroll down" className="mt-auto flex h-[17px] items-center"><svg width="9" height="6" viewBox="0 0 9 6"><path d="M.5 1l4 4 4-4" fill="none" stroke="#555" strokeWidth="1.800" /></svg></button>
        </div>
      </div>
      <footer className="flex h-[22px] items-center">
        <button aria-label="First" className="ml-1 w-4"><svg width="8" height="8" viewBox="0 0 8 8"><path d="M1 0v8M8 0v8L3 4z" fill="#888" stroke="#888" strokeWidth=".8" /></svg></button>
        <button aria-label="Previous page" className="w-5 pl-[2px]"><svg width="6" height="8" viewBox="0 0 6 8"><path d="M5 0v8L1 4z" fill="#888" /></svg></button>
        <span className="mx-2">1 of 1</span>
        <button aria-label="Next page" className="ml-3 w-4"><svg width="6" height="8" viewBox="0 0 6 8"><path d="M0 0v8l5-4z" fill="#888" /></svg></button>
        <button aria-label="Last" className="w-3"><svg width="8" height="8" viewBox="0 0 8 8"><path d="M7 0v8M0 0v8l5-4z" fill="#888" stroke="#888" strokeWidth=".8" /></svg></button>
        <button className="h-full w-[63px] border-x border-b border-[#c6c6cf] bg-white">Summary</button>
      </footer>
    </section>
  );
}

/* ---------- dialog ---------- */

const Heading = ({ children }: Children) => <h3 className="h-[18px] leading-[18px] font-semibold text-[#5c6f99]">{children}</h3>;

function IconButton({ name, off }: { name: string; off?: boolean }) {
  return (
    <button aria-label={name} disabled={off} className={`flex h-[21px] w-[25px] shrink-0 items-center justify-center ${off ? 'bg-[#e5e5e5]' : 'bg-[#cce4f7]'}`}>
      <Icon name={name} size={17} />
    </button>
  );
}

const Spinner = () => (
  <span className="flex flex-col gap-1">
    <button aria-label="Increase" className="block"><svg width="5" height="3" viewBox="0 0 5 3" className="block"><path d="M2.500 0L5 3H0z" fill="#555" /></svg></button>
    <button aria-label="Decrease" className="block"><svg width="5" height="3" viewBox="0 0 5 3" className="block"><path d="M0 0h5L2.500 3z" fill="#555" /></svg></button>
  </span>
);

function Field({ label, id, first, children }: Children & { label: string; id: string; first?: boolean }) {
  return (
    <div className={first ? 'mt-2' : 'mt-[15px]'}>
      <label htmlFor={id} className="mb-[2px] block h-[18px] leading-[18px]">{label}</label>
      <div className="flex items-center">{children}</div>
    </div>
  );
}

// Frame with its undeformed axes dashed and the swayed shape on top
function FrameDiagram({ title, size }: { title: string; size: React.ReactNode }) {
  const cols = [43, 77.4, 111.8, 146.2, 180.6];
  const levels = [20, 41, 62, 82.7, 103.3];
  const sway = [[23.7, 22], [22, 42.7], [18, 63], [11.7, 83.3], [5.3, 103.3]];
  return (
    <svg width="224" height="126" viewBox="0 0 224 126" fontFamily="Liberation Sans, sans-serif">
      <g stroke="#8a8a96" strokeWidth=".9" strokeDasharray="7 2 1 2">
        {cols.map((x) => <path key={x} d={`M${x} 20v104`} />)}
        {levels.map((y) => <path key={y} d={`M43 ${y}h138`} />)}
      </g>
      <g fill="none" stroke="#119ade" strokeWidth="1.300">
        {cols.map((x) => (
          <g key={x}>
            <path d={`M${x} 123.500C${x + 3} 105 ${x + 22} 72 ${x + 23.7} 22`} />
            <path d={`M${x - 5} 124h10`} strokeWidth="2.300" />
          </g>
        ))}
        {sway.map(([dx, y]) => (
          <path key={y} d={`M${43 + dx} ${y}q17 1.500 34.400 0t34.400 0 34.400 0 34.400 0`} />
        ))}
      </g>
      <g stroke="#e6007e" fill="#e6007e">
        <path d="M180.500 5.500v11M204.500 5.500v11M181 11h24" strokeWidth=".8" />
        <path d="M181.500 11l6-2v4zM204 11l-6-2v4z" stroke="none" />
      </g>
      <text x="43" y="13" fontSize="9" fill="#666672">{title}</text>
      <text x="193" y="8" fontSize="9" textAnchor="middle" fill="#e6007e">{size}</text>
    </svg>
  );
}

function Dialog() {
  return (
    <div role="dialog" aria-labelledby="dialog-title" className="absolute top-[240px] left-[728px] w-[851px] border border-[#6a6a6a] bg-white">
      <header className="flex h-[30px] items-center pr-[18px] pl-2">
        <Logo />
        <h2 id="dialog-title" className="ml-[5px] flex-1">Edit Imperfection Case</h2>
        <button aria-label="Minimize" disabled className="mr-9"><svg width="10" height="10" viewBox="0 0 10 10"><path d="M0 5.500h10" stroke="#bbb" /></svg></button>
        <button aria-label="Maximize" className="mr-9"><svg width="10" height="10" viewBox="0 0 10 10"><path d="M.5.5h9v9h-9z" fill="none" stroke="#000" /></svg></button>
        <button aria-label="Close dialog"><svg width="10" height="10" viewBox="0 0 10 10"><path d="M0 0l10 10M10 0L0 10" stroke="#000" strokeWidth="1.200" /></svg></button>
      </header>
      <div className="flex gap-[10px] bg-[#d1d0d5] px-[9px] pt-[9px] pb-2">
        <section className="flex w-[200px] shrink-0 flex-col bg-white pb-1">
          <div className="h-[19px] pl-[5px]"><Heading>List</Heading></div>
          <div className="mx-[2px] flex h-[18px] items-center bg-[#cde8ff]">
            <span className="flex h-[18px] w-[53px] items-center border border-dotted border-black pl-px">
              <span className="flex h-[13px] w-[30px] items-center justify-center bg-[#009c78] text-[#bfe8ff]">Buc</span>
              <span className="ml-[3px] h-[11px] w-[11px] bg-[#abad3f]" />
            </span>
            <span className="ml-1">IC1</span>
          </div>
          <div className="ml-[55px] w-[23px] flex-1 border-x border-[#e2e2e2]" />
          <div className="mt-[5px] flex px-[5px]">
            <IconButton name="New" />
            <span className="w-[3px]" />
            <IconButton name="Duplicate" />
            <span className="w-[10px]" />
            <IconButton name="Check all" off />
            <span className="w-[3px]" />
            <IconButton name="Invert checks" off />
            <span className="flex-1" />
            <IconButton name="Delete" />
          </div>
        </section>

        <div className="flex min-w-0 flex-1 flex-col">
          <div className="flex gap-[10px]">
            <section className="h-[47px] w-[60px] bg-white px-[5px]">
              <Heading>No.</Heading>
              <input aria-label="No." readOnly value="IC1" className="mt-1 h-5 w-[50px] bg-[#e6e6e6] pl-[3px]" />
            </section>
            <section className="h-[47px] flex-1 bg-white px-[5px]">
              <Heading>Imperfection Case Name</Heading>
              <Combo label="Imperfection Case Name" value="" className="mt-1" />
            </section>
            <section className="h-[47px] w-[233px] bg-white px-[5px]">
              <Heading>Active</Heading>
              <div className="mt-2"><CheckBox state="on" label="Active" /></div>
            </section>
          </div>

          <div role="tablist" className="mt-[10px] flex h-[22px] items-end">
            <button role="tab" className="h-5 w-[61px] bg-[#dedede] pt-px">Main</button>
            <button role="tab" aria-selected="true" className="h-[22px] w-[95px] bg-[#ebebeb] pt-[3px]">Buckling Mode</button>
            <button role="tab" className="h-5 w-[76px] bg-[#dedede] pt-px">Assignment</button>
          </div>

          <div className="flex gap-[10px] bg-[#ebebeb] px-[9px] pt-[9px] pb-2">
            <div className="flex min-w-0 flex-1 flex-col gap-[10px]">
              <section className="bg-white px-[5px] pb-[6px]">
                <Heading>Imperfection Shape from</Heading>
                <Field first label="Buckling mode from load case" id="load-case">
                  <Combo label="" id="load-case" value="LC1" className="flex-1">
                    <span className="flex h-[13px] w-[30px] items-center justify-center bg-black text-white">G</span>
                  </Combo>
                  <span className="w-[5px]" />
                  <IconButton name="New" />
                  <span className="w-[3px]" />
                  <IconButton name="Modify" />
                </Field>
                <Field label="Buckling mode No." id="mode-no">
                  <span className="flex h-5 w-[57px] items-center bg-[#e7e7f1] pr-[6px]">
                    <input id="mode-no" defaultValue="1" className="h-full min-w-0 flex-1 bg-transparent pl-[3px] outline-none" />
                    <Spinner />
                  </span>
                </Field>
              </section>

              <section className="bg-white px-[5px] pb-[42px]">
                <Heading>Imperfection Magnitude</Heading>
                <fieldset className="mt-2">
                  <legend className="h-[18px] leading-[18px]">Reference location</legend>
                  <div className="flex h-[22px] items-center gap-[6px]">
                    <Radio name="location" id="loc-largest" on />
                    <label htmlFor="loc-largest">Location with largest displacement</label>
                  </div>
                  <div className="flex h-[22px] items-center gap-[6px]">
                    <Radio name="location" id="loc-node" />
                    <label htmlFor="loc-node">Node No.</label>
                  </div>
                  <div className="mt-[2px] flex gap-[5px] pl-[19px]">
                    <input aria-label="Node number" disabled className="h-[21px] w-[200px] bg-[#e5e5e5]" />
                    <IconButton name="Pick" off />
                  </div>
                </fieldset>
                <Field label="Coordinate system" id="coord-system">
                  <Combo label="" id="coord-system" value="1 - Global XYZ" className="w-[200px]">
                    <span className="h-[11px] w-[11px] bg-[#ccffff]" />
                  </Combo>
                  <span className="w-[5px]" />
                  <IconButton name="New" />
                  <span className="w-[3px]" />
                  <IconButton name="Modify" />
                </Field>
                <Field label="Imperfection direction" id="direction">
                  <Combo label="" id="direction" value="Yʟ" pad="pl-0" className="w-[200px]" />
                </Field>
                <Field label="Imperfection magnitude" id="magnitude">
                  <span className="w-[30px]">δ<sub className="bottom-[-1px] text-[9px]">0</sub></span>
                  <span className="relative flex h-5 w-[90px] items-center bg-[#e7e7f1] pr-1">
                    <input id="magnitude" defaultValue="0.037" className="h-full min-w-0 flex-1 bg-transparent pr-[9px] text-right outline-none" />
                    <Spinner />
                    <button aria-label="More values" className="ml-[7px]"><svg width="5" height="8" viewBox="0 0 5 8"><path d="M0 0v8l5-4z" fill="#222" /></svg></button>
                    <svg width="6" height="6" viewBox="0 0 6 6" className="absolute top-px left-px"><path d="M0 0h6L0 6z" fill="#f5f000" /></svg>
                  </span>
                  <span className="ml-[5px]">[m]</span>
                </Field>
              </section>
            </div>

            <section className="flex w-[224px] shrink-0 flex-col bg-white pt-[95px] pb-[5px]">
              <FrameDiagram title="model buckling mode" size="u" />
              <div className="flex h-[58px] items-center justify-center">
                <svg width="14" height="28" viewBox="0 0 14 28">
                  <defs>
                    <linearGradient id="arrow" x1="0" x2="1"><stop offset="0.200" stopColor="#7189ad" /><stop offset="0.550" stopColor="#a9aeb6" /><stop offset="1" stopColor="#eec48c" /></linearGradient>
                  </defs>
                  <path d="M3 0h8v19h3l-7 9-7-9h3z" fill="url(#arrow)" />
                </svg>
              </div>
              <FrameDiagram title="global imperfection" size={<>δ<tspan fontSize="7">0</tspan></>} />
              <div className="mt-auto pl-[5px]"><IconButton name="Render" off /></div>
            </section>
          </div>
        </div>
      </div>
      <footer className="flex h-[42px] items-center pr-[10px] pl-[9px]">
        <div className="flex gap-[10px] pb-[2px]">
          <IconButton name="Units" />
          <IconButton name="Display settings" />
          <IconButton name="Formula" />
        </div>
        <div className="ml-auto flex gap-[10px]">
          <button className="h-[21px] w-[81px] border-2 border-[#0078d7] bg-[#e1e1e1] leading-[17px]">OK</button>
          <button className="h-[21px] w-[81px] border border-[#adadad] bg-[#e1e1e1]">Cancel</button>
          <button disabled className="h-[21px] w-[81px] border border-[#bfbfbf] bg-[#cccccc] text-[#838383]">Apply</button>
        </div>
      </footer>
      <SizeGrip />
    </div>
  );
}

const SizeGrip = () => (
  <svg width="9" height="9" viewBox="0 0 9 9" className="absolute right-[2px] bottom-[2px]">
    <path d="M7 0h2v2H7zM7 3.500h2v2H7zM3.500 3.500h2v2h-2zM7 7h2v2H7zM3.500 7h2v2h-2zM0 7h2v2H0z" fill="#bbb" />
  </svg>
);

/* ---------- main window ---------- */

const menus = ['File', 'Edit', 'View', 'Insert', 'Assign', 'Calculate', 'Results', 'Tools', 'Options', 'Window', 'CAD-BIM', 'Help'];

const fileTools = [
  'New model', 'Open', 'Dlubal Center', 'Blocks', 'Edit', 'Save', 'Print', 'v', 'Report', '|', 'Undo', 'v', 'Redo', 'v', '|',
  '*Navigator', '*Tables', 'Control panel', 'Console', 'Script', 'Manager', '||',
  'Select area', 'Select ellipse', 'Select ring', 'Select lasso', 'Select by value', '||', 'New load case', 'Edit load case',
];

const resultTools = [
  'Delete filter', 'v', 'Show imperfection', 'Imperfection values', 'Show loads', 'Load values', 'Show mesh', 'v',
  '*Show results', '*Result values', '|', 'Result settings', 'Abacus', 'v', '||', 'Zoom all', 'Solid view', 'Edit view', '|',
  'View X', 'View -Y', 'View Z', 'View -X', 'v', 'Microscope', 'v', '|', 'Model display', 'v',
];

const insertTools = [
  'New node', 'v', 'New line', 'New member', 'v', 'New member set', 'v', '|', 'Nodal support', 'Line support', 'Surface support', '|',
  'Dimension', 'v', 'Dimension slope', '|', 'New surface', 'v', 'New opening', 'v', 'Surface opening', 'v', 'New solid', 'v', 'Solid set', '|',
  'Nodal load', 'Line load', 'Member load', 'Solid load', 'Imperfection', 'v', 'Imposed displacement', 'v', '||', 'Filter', '|',
  '*Deformations', 'Internal forces', 'Stresses', 'Solid results', 'Reactions', 'Section results', '|',
  'Wave 1', 'Wave 2', 'Wave 3', 'Wave 4', 'Wave 5', 'New wave', '|', 'Clipping', 'v', '||',
];

const planeTools = [
  'Edit coordinate system', '|', 'Grid settings', 'Snap', '*Work plane XY', 'Work plane YZ', 'Work plane XZ', '|',
  'Copy', 'Rotate', 'Mirror', 'Intersect', 'Settings', '||', 'Mesh report', 'v',
];

function StatusBar() {
  return (
    <footer className="flex h-[21px] shrink-0 items-center pl-[775px]">
      {['SNAP', 'GRID', 'LGRID', 'OSNAP'].map((s) => (
        <button key={s} className="mr-[2px] h-[19px] border-t border-l border-[#bbb] bg-[#ececec] px-[3px]">{s}</button>
      ))}
      <span className="h-5 w-[89px] border-l border-[#d0d0d0]" />
      <span className="h-5 w-[106px] border-l border-[#d0d0d0]" />
      <span className="h-5 w-[156px] border-l border-[#d0d0d0] pl-1 leading-5">CS: Global XYZ</span>
      <span className="h-5 w-[66px] border-l border-[#d0d0d0] pl-1 leading-5">Plane: XY</span>
      <span className="h-5 w-[76px] border-l border-[#d0d0d0]" />
      <span className="h-5 w-[76px] border-l border-[#d0d0d0]" />
      <span className="h-5 w-[76px] border-x border-[#d0d0d0]" />
    </footer>
  );
}

export default function App() {
  const mdi = 'flex h-[18px] w-4 items-center justify-center border border-[#e2e2e2] bg-white';
  return (
    <div className="relative flex h-screen min-h-[900px] w-full flex-col overflow-hidden border border-[#a0a0a0] bg-[#f7f7f7] font-['Noto_Sans','Open_Sans',sans-serif] text-[11px] text-[#111]">
      <header className="flex h-[30px] shrink-0 items-center bg-white pr-[18px] pl-2">
        <Logo />
        <h1 className="ml-[5px] flex-1 text-[#8c8c8c]">Dlubal RFEM | 6.01.0003 | SPB_lateral restraint top flange_7DOF.rf6</h1>
        <button aria-label="Minimize window" className="mr-9"><svg width="10" height="10" viewBox="0 0 10 10"><path d="M0 5.500h10" stroke="#888" /></svg></button>
        <button aria-label="Maximize window" className="mr-9"><svg width="10" height="10" viewBox="0 0 10 10"><path d="M.5.5h9v9h-9z" fill="none" stroke="#888" /></svg></button>
        <button aria-label="Close window"><svg width="10" height="10" viewBox="0 0 10 10"><path d="M0 0l10 10M10 0L0 10" stroke="#888" /></svg></button>
      </header>
      <nav className="flex h-5 shrink-0 items-center">
        <svg width="16" height="13" viewBox="0 0 16 13" className="mr-2"><path d="M0 0h16v13H0z" fill="#1f2f6e" /><path d="M0 7h16M5 0v11M5 3h3l7 4" stroke="#fff" fill="none" /></svg>
        <div className="flex gap-4">
          {menus.map((m) => <button key={m}>{m}</button>)}
        </div>
        <p className="mr-2 ml-auto">Online License 26 | Irena Kirova | Dlubal Software GmbH</p>
        <div className="mr-px flex gap-[2px]">
          <button aria-label="Minimize document" className={mdi}><svg width="7" height="9" viewBox="0 0 7 9"><path d="M0 7h7" stroke="#5b6b80" strokeWidth="1.800" /></svg></button>
          <button aria-label="Restore document" className={mdi}><RestoreIcon /></button>
          <button aria-label="Close document" className={mdi}><CrossIcon /></button>
        </div>
      </nav>
      <div className="flex h-7 shrink-0 items-center overflow-hidden border-t border-[#e0e0e0] pb-[2px] pl-1">
        <Grip />
        <span className="w-[2px] shrink-0" />
        <Tools items={fileTools} />
        <Combo label="Load case" value="IC1" divider className="w-[270px] shrink-0"><Badge /></Combo>
        <PrevNext />
        <Tools items={resultTools} />
        <More />
      </div>
      <div className="flex h-7 shrink-0 items-center overflow-hidden border-t border-[#e0e0e0] pb-[2px] pl-1">
        <Grip />
        <span className="w-[2px] shrink-0" />
        <Tools items={insertTools} />
        <Combo label="Coordinate system" value="1 - Global XYZ" className="w-[137px] shrink-0"><span className="h-[11px] w-[11px] bg-[#ccffff]" /></Combo>
        <Tools items={planeTools} />
        <More />
      </div>
      <main className="flex min-h-0 flex-1 gap-1 pb-[2px]">
        <Navigator />
        <div className="flex min-w-0 flex-1 flex-col">
          <ModelView />
          <Summary />
        </div>
      </main>
      <StatusBar />
      <SizeGrip />
      <Dialog />
    </div>
  );
}
